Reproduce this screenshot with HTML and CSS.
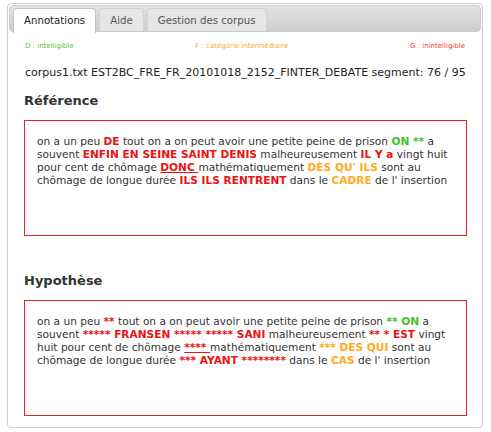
FILE: index.html
```html
<!DOCTYPE html>
<html>
<head>
<title>Annotations</title>
<meta charset="UTF-8">
<link rel="stylesheet" href="styles.css">
</head>
<body>

<div class="tabs">
  <ul class="nav">
    <li class="tab active">Annotations</li>
    <li class="tab">Aide</li>
    <li class="tab">Gestion des corpus</li>
  </ul>

  <div class="panel">
    <div class="legend">
      <span class="lg-d">D : intelligible</span>
      <span class="lg-f">F : catégorie intermédiaire</span>
      <span class="lg-g">G : inintelligible</span>
    </div>

    <div class="corpus">corpus1.txt EST2BC_FRE_FR_20101018_2152_FINTER_DEBATE segment: 76 / 95</div>

    <h2>Référence</h2>
    <div class="box">
      on a un peu <b class="g">DE</b> tout on a on peut avoir une petite peine de prison <b class="d">ON **</b> a
      souvent <b class="g">ENFIN EN SEINE SAINT DENIS</b> malheureusement <b class="g">IL Y a</b> vingt huit
      pour cent de chômage <b class="g u">DONC </b>mathématiquement <b class="f">DÈS QU' ILS</b> sont au
      chômage de longue durée <b class="g">ILS ILS RENTRENT</b> dans le <b class="f">CADRE</b> de l' insertion
    </div>

    <h2 class="second">Hypothèse</h2>
    <div class="box">
      on a un peu <b class="g">**</b> tout on a on peut avoir une petite peine de prison <b class="d">** ON</b> a
      souvent <b class="g">***** FRANSEN ***** ***** SANI</b> malheureusement <b class="g">** * EST</b> vingt
      huit pour cent de chômage <b class="g u">**** </b>mathématiquement <b class="f">*** DES QUI</b> sont au
      chômage de longue durée <b class="g">*** AYANT ********</b> dans le <b class="f">CAS</b> de l' insertion
    </div>
  </div>
</div>

</body>
</html>
```

FILE: styles.css
```css
* {
  box-sizing: border-box;
}
body {
  margin: 0;
  padding: 3px 8px 0 7px;
  font-family: "DejaVu Sans", Verdana, sans-serif;
  color: #222;
  background: #fff;
}
.tabs {
  border: 1px solid #cfcfcf;
  border-radius: 4px;
  padding: 1px;
  height: 425px;
}
.nav {
  display: flex;
  gap: 3px;
  list-style: none;
  margin: 0;
  padding: 2px 3px 0;
  height: 27px;
  background: linear-gradient(#e4e4e4, #cdcdcd);
  border: 1px solid #cccccc;
  border-radius: 4px;
}
.tab {
  font-size: 10.2px;
  line-height: 13px;
  padding: 5px 10px 6px;
  border: 1px solid #d3d3d3;
  border-bottom: 0;
  border-radius: 4px 4px 0 0;
  background: #e6e6e6;
  color: #555;
}
.tab.active {
  background: #fff;
  color: #222;
  border-color: #c4c4c4;
  height: 25px;
}
.panel {
  padding: 10px 14px 0 15px;
}
.legend {
  display: flex;
  justify-content: space-between;
  font-size: 7px;
  line-height: 9px;
  padding: 0 2px 0 1px;
}
.lg-d { color: #55c43a; }
.lg-f { color: #ffa92b; }
.lg-g { color: #f33a3a; }
.corpus {
  font-size: 11px;
  line-height: 14px;
  margin: 15px 0 0 1px;
}
h2 {
  font-size: 13px;
  line-height: 16px;
  font-weight: bold;
  color: #333;
  margin: 13px 0 11px;
}
h2.second {
  margin-top: 37px;
}
.box {
  height: 116px;
  border: 1px solid #e32424;
  padding: 14px 12px;
  font-size: 10.6px;
  line-height: 13px;
  color: #333;
}
.box b {
  font-weight: bold;
}
.g { color: #ee1111; }
.f { color: #ffaa22; }
.d { color: #3fbf2a; }
.u { text-decoration: underline; }
```
